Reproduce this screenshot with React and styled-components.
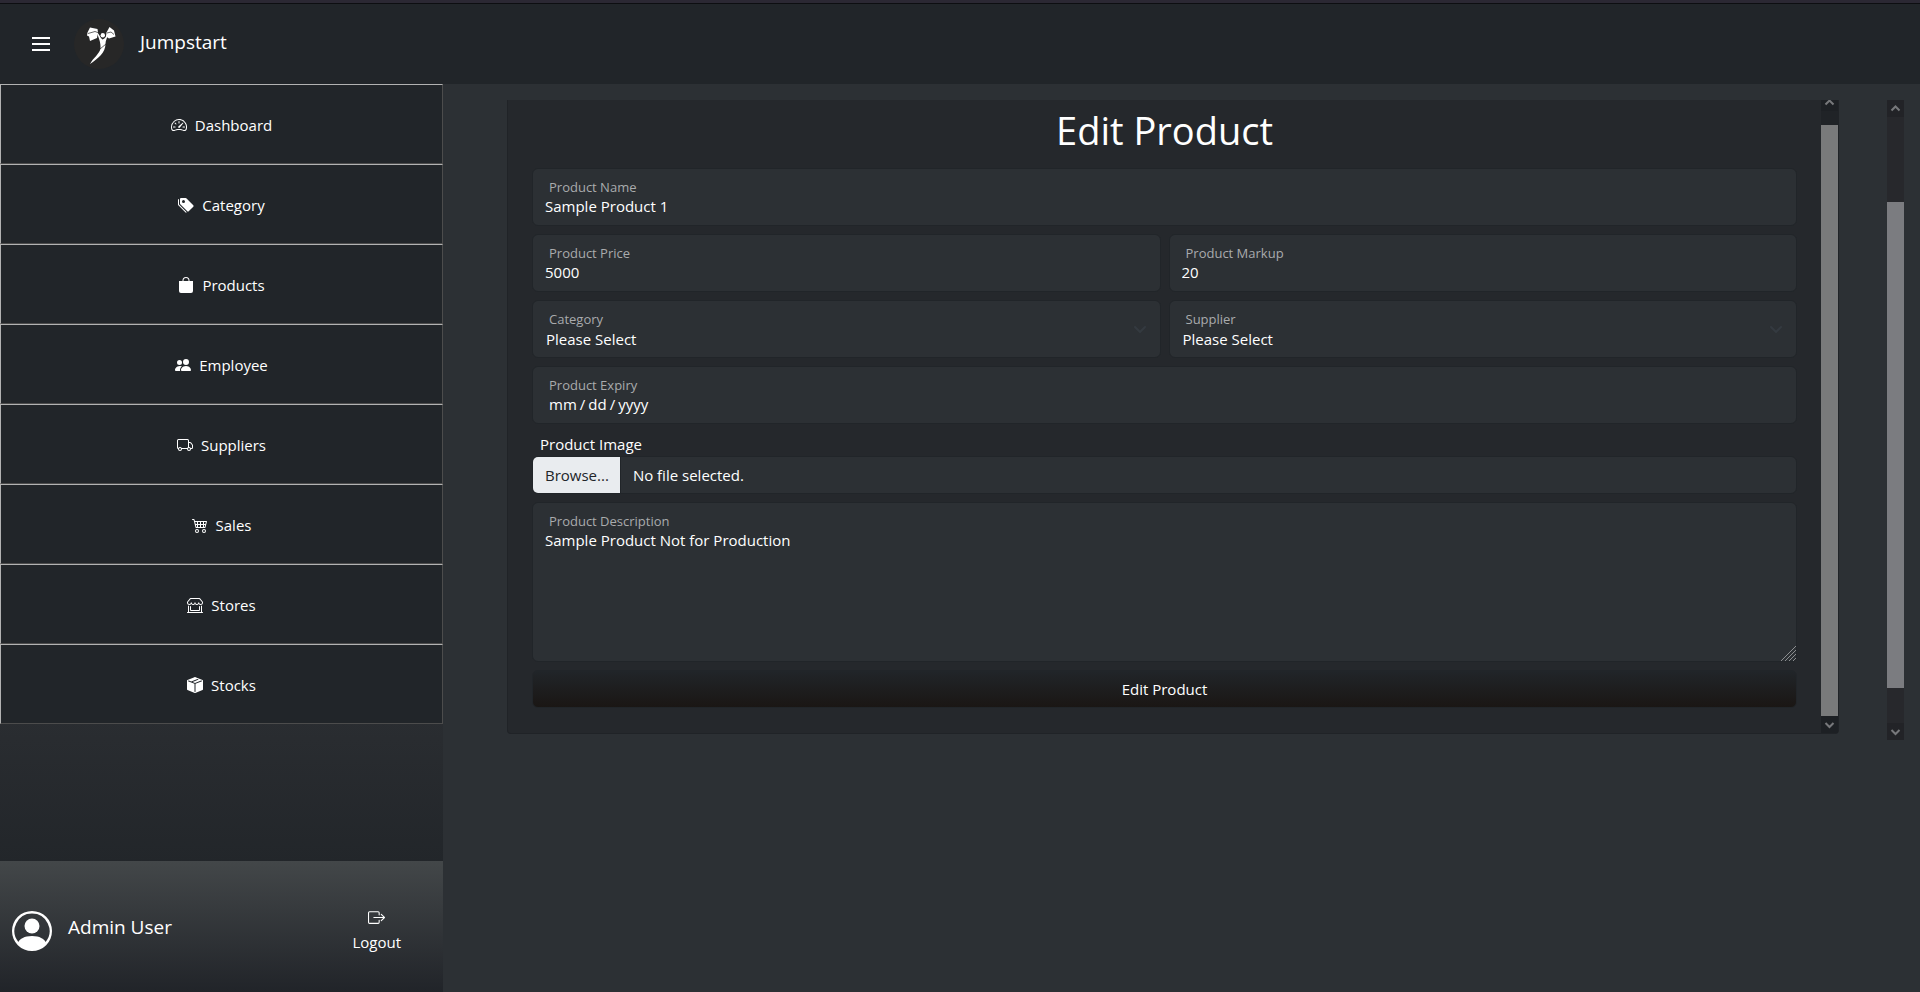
import React from "react";
import styled, { createGlobalStyle, css } from "styled-components";
import {
  BsSpeedometer2, BsTagsFill, BsBagFill, BsPeopleFill, BsTruck, BsCart4, BsShopWindow,
  BsBoxSeamFill, BsBoxArrowRight, BsPersonCircle,
} from "react-icons/bs";

const GlobalStyle = createGlobalStyle`
  *, *::before, *::after { box-sizing: border-box; }
  body {
    margin: 0;
    background: #2c3034;
    color: #fff;
    font: 15px/24px "Open Sans", "Noto Sans", sans-serif;
  }
  button, input, select, textarea { font: inherit; color: inherit; }
`;

const Page = styled.div`
  min-height: 100vh;
  display: flex;
  flex-direction: column;
`;

const Header = styled.header`
  height: 84px;
  flex: none;
  display: flex;
  align-items: center;
  padding: 0 32px;
  background: #212529;
  border-top: 3px solid #2b2833;
  box-shadow: inset 0 1px 0 #0d0e11;
`;

const MenuButton = styled.button`
  display: flex;
  padding: 0;
  border: 0;
  background: none;
  cursor: pointer;
`;

const Brand = styled.a`
  display: flex;
  align-items: center;
  gap: 16px;
  margin-left: 24px;
  color: #fff;
  font-size: 19px;
  text-decoration: none;
`;

const BrandName = styled.span`
  padding-bottom: 4px;
`;

const Body = styled.div`
  flex: 1;
  display: flex;
`;

const Sidebar = styled.aside`
  width: 443px;
  flex: none;
  display: flex;
  flex-direction: column;
  background: linear-gradient(#2a2d31 0, #2a2d31 70%, #212529 88%);
`;

const NavList = styled.nav`
  display: flex;
  flex-direction: column;
`;

const NavButton = styled.button`
  height: 80px;
  display: flex;
  align-items: center;
  justify-content: center;
  gap: 8px;
  padding: 2px 0 0;
  border: 1px solid;
  border-color: #b2b2b2 #4c4c4c #4c4c4c #b2b2b2;
  background: #212529;
  cursor: pointer;
`;

const UserPanel = styled.div`
  height: 131px;
  margin-top: auto;
  display: flex;
  align-items: center;
  padding: 8px 42px 0 12px;
  background: linear-gradient(#434749, #212429);
`;

const UserName = styled.span`
  margin-left: 16px;
  padding-bottom: 8px;
  font-size: 19px;
`;

const LogoutButton = styled.button`
  margin-left: auto;
  display: flex;
  flex-direction: column;
  align-items: center;
  gap: 4px;
  padding: 2px 0 0;
  border: 0;
  background: none;
  cursor: pointer;
`;

const Main = styled.main`
  flex: 1;
  min-width: 0;
  display: flex;
  align-items: flex-start;
  gap: 48px;
  padding: 16px 16px 0 64px;
`;

const Card = styled.section`
  flex: 1;
  min-width: 0;
  display: flex;
  border: 1px solid #202327;
  border-top: 0;
  border-radius: 0 0 4px 4px;
  background: #25282c;
`;

const Form = styled.form`
  flex: 1;
  min-width: 0;
  display: flex;
  flex-direction: column;
  gap: 8px;
  padding: 6px 24px 25px;
`;

const Title = styled.h1`
  margin: 0 0 6px;
  font-size: 38px;
  font-weight: 400;
  line-height: 48px;
  text-align: center;
`;

const Row = styled.div`
  display: grid;
  grid-template-columns: 1fr 1fr;
  gap: 8px;
`;

const Field = styled.div`
  position: relative;
  display: flex;
`;

const FieldLabel = styled.label`
  position: absolute;
  top: 9px;
  left: 17px;
  color: #a9abad;
  font-size: 13px;
  line-height: 20px;
`;

const control = css`
  width: 100%;
  height: 58px;
  margin: 0;
  padding: 26px 12px 8px;
  border: 1px solid #212529;
  border-radius: 6px;
  outline: 0;
  background: #2c3034;
`;

const TextInput = styled.input`
  ${control}
`;

const DateInput = styled.input`
  ${control}
  padding-left: 15px;
  &::-webkit-datetime-edit-fields-wrapper { padding: 0; }
  &::-webkit-datetime-edit-text { padding: 0 2px; }
  &::-webkit-calendar-picker-indicator { display: none; }
`;

const Select = styled.select`
  ${control}
  padding-left: 13px;
  appearance: none;
`;

const SelectArrow = styled.svg`
  position: absolute;
  right: 13px;
  top: 21px;
  pointer-events: none;
`;

const TextArea = styled.textarea`
  ${control}
  height: 160px;
  padding-top: 25px;
  resize: none;
`;

const ResizeGrip = styled.svg`
  position: absolute;
  right: 1px;
  bottom: 1px;
  pointer-events: none;
`;

const FileGroup = styled.div`
  display: flex;
  flex-direction: column;
`;

const FileTitle = styled.span`
  padding: 0 8px;
  line-height: 24px;
`;

const FilePicker = styled.label`
  height: 38px;
  display: flex;
  align-items: stretch;
  border: 1px solid #212529;
  border-radius: 6px;
  overflow: hidden;
  background: #2c3034;
  line-height: 36px;
  cursor: pointer;
`;

const FileInput = styled.input`
  position: absolute;
  width: 1px;
  height: 1px;
  opacity: 0;
`;

const BrowseLabel = styled.span`
  padding: 0 11px 0 12px;
  border-right: 1px solid #212529;
  background: #e9ecef;
  color: #212529;
`;

const FileName = styled.span`
  padding: 0 12px;
`;

const SubmitButton = styled.button`
  height: 38px;
  border: 1px solid #212529;
  border-radius: 6px;
  background: linear-gradient(#212529, #1a1614);
  cursor: pointer;
`;

const Track = styled.div`
  width: 17px;
  flex: none;
  display: flex;
  flex-direction: column;
  background: ${(p) => (p.$outer ? "#27282c" : "#202327")};
  ${(p) => p.$outer && css`height: 640px;`}
`;

const TrackEnd = styled.div`
  height: ${(p) => (p.$clipped ? 11 : 17)}px;
  flex: none;
  display: flex;
  align-items: flex-end;
  overflow: hidden;
  background: ${(p) => (p.$outer ? "#222327" : "#1d2024")};
`;

const Thumb = styled.div`
  flex: 1;
  margin: ${(p) => (p.$outer ? "85px 0 35px" : "14px 0 0")};
  background: ${(p) => (p.$outer ? "#7b7c80" : "#797a7b")};
`;

const ArrowIcon = styled.svg`
  flex: none;
`;

const Chevron = ({ down }) => (
  <ArrowIcon width="17" height="17" viewBox="0 0 17 17" fill="none" stroke="#77787b" strokeWidth="2">
    <path d={down ? "M4.5 7l4 4 4-4" : "M4.5 10.5l4-4 4 4"} />
  </ArrowIcon>
);

const Scrollbar = ({ outer }) => (
  <Track $outer={outer} aria-hidden="true">
    <TrackEnd $outer={outer} $clipped={!outer}><Chevron /></TrackEnd>
    <Thumb $outer={outer} />
    <TrackEnd $outer={outer}><Chevron down /></TrackEnd>
  </Track>
);

const MenuIcon = () => (
  <svg width="18" height="14" viewBox="0 0 18 14" fill="#fff" aria-hidden="true">
    <path d="M0 0h18v2H0zM0 6h18v2H0zM0 12h18v2H0z" />
  </svg>
);

const Logo = () => (
  <svg width="50" height="50" viewBox="0 0 50 50" aria-hidden="true">
    <circle cx="25" cy="25" r="25" fill="#272727" />
    <g fill="#fff">
      <path d="M16 8.500l7.500 1.500.5 3.500-1 5.500-7 3-1-4.500-2-1 .5-3z" />
      <path d="M32.500 13.500l3-5.500 4.500 3.500 1.500 6-6.500 2-3-2z" />
      <circle cx="28.800" cy="16.200" r="2.200" />
      <path d="M22.500 13c2.500 1 3 5 6 7.500 3-1 3.500-4 5.500-6-.5 4-2.500 7-2.500 10 0 9.500-7.500 15-15.500 20.500 3.500-6.500 9.500-10 10.500-15.500.5-6-2-11-4-16.500z" />
    </g>
    <path d="M14 14.500l7-2 4 1.500M33 14l4-1 3 2.500M26 30l6-5" fill="none" stroke="#272727" strokeWidth=".7" />
  </svg>
);

const navItems = [
  ["Dashboard", BsSpeedometer2],
  ["Category", BsTagsFill],
  ["Products", BsBagFill],
  ["Employee", BsPeopleFill],
  ["Suppliers", BsTruck],
  ["Sales", BsCart4],
  ["Stores", BsShopWindow],
  ["Stocks", BsBoxSeamFill],
];

const SelectField = ({ id, label }) => (
  <Field>
    <Select id={id}><option>Please Select</option></Select>
    <FieldLabel htmlFor={id}>{label}</FieldLabel>
    <SelectArrow width="16" height="16" viewBox="0 0 16 16" fill="none" stroke="#343a40" strokeWidth="2" strokeLinecap="round" strokeLinejoin="round">
      <path d="m3 6 5 5 5-5" />
    </SelectArrow>
  </Field>
);

const InputField = ({ id, label, value }) => (
  <Field>
    <TextInput id={id} defaultValue={value} />
    <FieldLabel htmlFor={id}>{label}</FieldLabel>
  </Field>
);

export default function App() {
  return (
    <Page>
      <GlobalStyle />
      <Header>
        <MenuButton aria-label="Toggle menu"><MenuIcon /></MenuButton>
        <Brand href="#"><Logo /><BrandName>Jumpstart</BrandName></Brand>
      </Header>
      <Body>
        <Sidebar>
          <NavList>
            {navItems.map(([name, Icon]) => (
              <NavButton key={name}><Icon size={16} />{name}</NavButton>
            ))}
          </NavList>
          <UserPanel>
            <BsPersonCircle size={40} />
            <UserName>Admin User</UserName>
            <LogoutButton><BsBoxArrowRight size={17} />Logout</LogoutButton>
          </UserPanel>
        </Sidebar>
        <Main>
          <Card>
            <Form>
              <Title>Edit Product</Title>
              <InputField id="name" label="Product Name" value="Sample Product 1" />
              <Row>
                <InputField id="price" label="Product Price" value="5000" />
                <InputField id="markup" label="Product Markup" value="20" />
              </Row>
              <Row>
                <SelectField id="category" label="Category" />
                <SelectField id="supplier" label="Supplier" />
              </Row>
              <Field>
                <DateInput id="expiry" type="date" />
                <FieldLabel htmlFor="expiry">Product Expiry</FieldLabel>
              </Field>
              <FileGroup>
                <FileTitle id="image-title">Product Image</FileTitle>
                <FilePicker>
                  <FileInput type="file" aria-labelledby="image-title" />
                  <BrowseLabel>Browse...</BrowseLabel>
                  <FileName>No file selected.</FileName>
                </FilePicker>
              </FileGroup>
              <Field>
                <TextArea id="description" defaultValue="Sample Product Not for Production" />
                <FieldLabel htmlFor="description">Product Description</FieldLabel>
                <ResizeGrip width="15" height="15" viewBox="0 0 15 15" stroke="#8c8e90" strokeWidth="1">
                  <path d="M0 15L15 0M4 15L15 4M8 15L15 8M12 15L15 12" />
                </ResizeGrip>
              </Field>
              <SubmitButton type="button">Edit Product</SubmitButton>
            </Form>
            <Scrollbar />
          </Card>
          <Scrollbar outer />
        </Main>
      </Body>
    </Page>
  );
}
